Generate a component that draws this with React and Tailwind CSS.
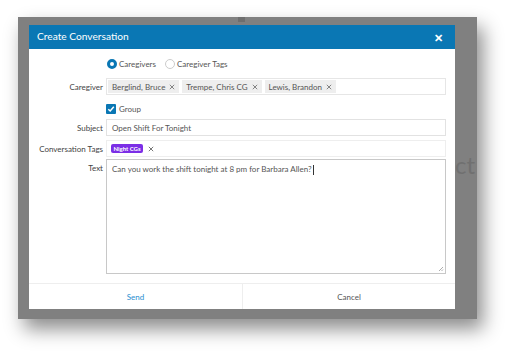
const font = { fontFamily: 'Lato, "Open Sans", sans-serif' }

function XIcon({ size = 6, color = '#777' }) {
  return (
    <svg width={size} height={size} viewBox="0 0 6 6">
      <path d="M0.8 0.8 L5.2 5.2 M5.2 0.8 L0.8 5.2" stroke={color} strokeWidth="0.9" />
    </svg>
  )
}

function Tag({ label }) {
  return (
    <span className="flex items-center gap-[4px] h-[13px] pl-[4px] pr-[4px] bg-[#eeeeee] text-[#555] text-[8px] leading-none">
      {label}
      <XIcon />
    </span>
  )
}

function Row({ label, children, className = '' }) {
  return (
    <div className={`flex items-center ${className}`}>
      <div className="w-[77px] pr-[3px] text-right text-[8px] text-[#444] leading-none">{label}</div>
      <div className="flex-1 pr-[9px]">{children}</div>
    </div>
  )
}

export default function App() {
  return (
    <div className="w-[512px] h-[355px] bg-white overflow-hidden" style={font}>
      <div className="ml-[18px] mt-[17px] w-[459px] h-[302px] bg-[#808080] shadow-[6px_10px_18px_rgba(0,0,0,0.45)] flex flex-col">
        <div className="h-[8px] flex">
          <div className="ml-[220px] w-[7px] h-[5px] bg-[#6e6e6e]" />
        </div>
        <div className="flex">
          <div className="w-[11px]" />
          <div className="w-[426px] h-[284px] bg-white flex flex-col">
            <div className="h-[24px] bg-[#0a77b4] flex items-center justify-between pl-[8px] pr-[12px]">
              <span className="text-white text-[10.2px]">Create Conversation</span>
              <span className="text-white text-[11px] font-bold leading-none">✕</span>
            </div>
            <div className="flex-1 flex flex-col">
              <div className="flex items-center gap-[9px] pl-[78px] mt-[10px] text-[8px] text-[#555] leading-none">
                <span className="flex items-center gap-[2px]">
                  <span className="w-[10px] h-[10px] rounded-full border-[3px] border-[#0a77b4] bg-white" />
                  Caregivers
                </span>
                <span className="flex items-center gap-[2px]">
                  <span className="w-[10px] h-[10px] rounded-full border border-[#ccc] bg-white" />
                  Caregiver Tags
                </span>
              </div>
              <Row label="Caregiver" className="mt-[9px]">
                <div className="h-[17px] border border-[#e6e6e6] flex items-center gap-[3px] px-[1px]">
                  <Tag label="Berglind, Bruce" />
                  <Tag label="Trempe, Chris CG" />
                  <Tag label="Lewis, Brandon" />
                </div>
              </Row>
              <div className="flex items-center gap-[3px] pl-[77px] mt-[9px] text-[8px] text-[#555] leading-none">
                <span className="w-[10px] h-[10px] bg-[#0a77b4] rounded-[1px] flex items-center justify-center">
                  <svg width="8" height="8" viewBox="0 0 8 8">
                    <path d="M1.3 4.2 L3.2 6 L6.8 1.8" stroke="white" strokeWidth="1.5" fill="none" />
                  </svg>
                </span>
                Group
              </div>
              <Row label="Subject" className="mt-[5px]">
                <div className="h-[17px] border border-[#e2e2e2] flex items-center px-[5px] text-[8px] text-[#555] leading-none">
                  Open Shift For Tonight
                </div>
              </Row>
              <Row label="Conversation Tags" className="mt-[4px]">
                <div className="h-[17px] border border-[#eeeeee] flex items-center gap-[5px] px-[4px]">
                  <span className="h-[9px] w-[32px] justify-center rounded-[2px] bg-[#7b2ee6] text-white text-[6px] font-bold flex items-center leading-none">Night CGs</span>
                  <XIcon color="#666" />
                </div>
              </Row>
              <div className="flex mt-[2px]">
                <div className="w-[77px] pr-[3px] pt-[5px] text-right text-[8px] text-[#444] leading-none">Text</div>
                <div className="flex-1 pr-[9px]">
                  <div className="h-[115px] border border-[#c8c8c8] px-[5px] pt-[5px] text-[8px] text-[#555] leading-none relative">
                    Can you work the shift tonight at 8 pm for Barbara Allen?<span className="inline-block w-px h-[10px] bg-[#333] align-middle ml-[1px]" />
                    <svg className="absolute right-[1px] bottom-[1px]" width="6" height="6" viewBox="0 0 6 6">
                      <path d="M1 5 L5 1 M3.5 5 L5 3.5" stroke="#999" strokeWidth="0.8" />
                    </svg>
                  </div>
                </div>
              </div>
            </div>
            <div className="h-[26px] border-t border-[#eee] flex text-[8px] leading-none">
              <div className="w-[214px] border-r border-[#eee] flex items-center justify-center text-[#2b8fd0]">Send</div>
              <div className="flex-1 flex items-center justify-center text-[#555]">Cancel</div>
            </div>
          </div>
          <div className="flex-1 pt-[128px] text-[#707070] text-[24px] leading-none overflow-hidden">ct</div>
        </div>
      </div>
    </div>
  )
}
